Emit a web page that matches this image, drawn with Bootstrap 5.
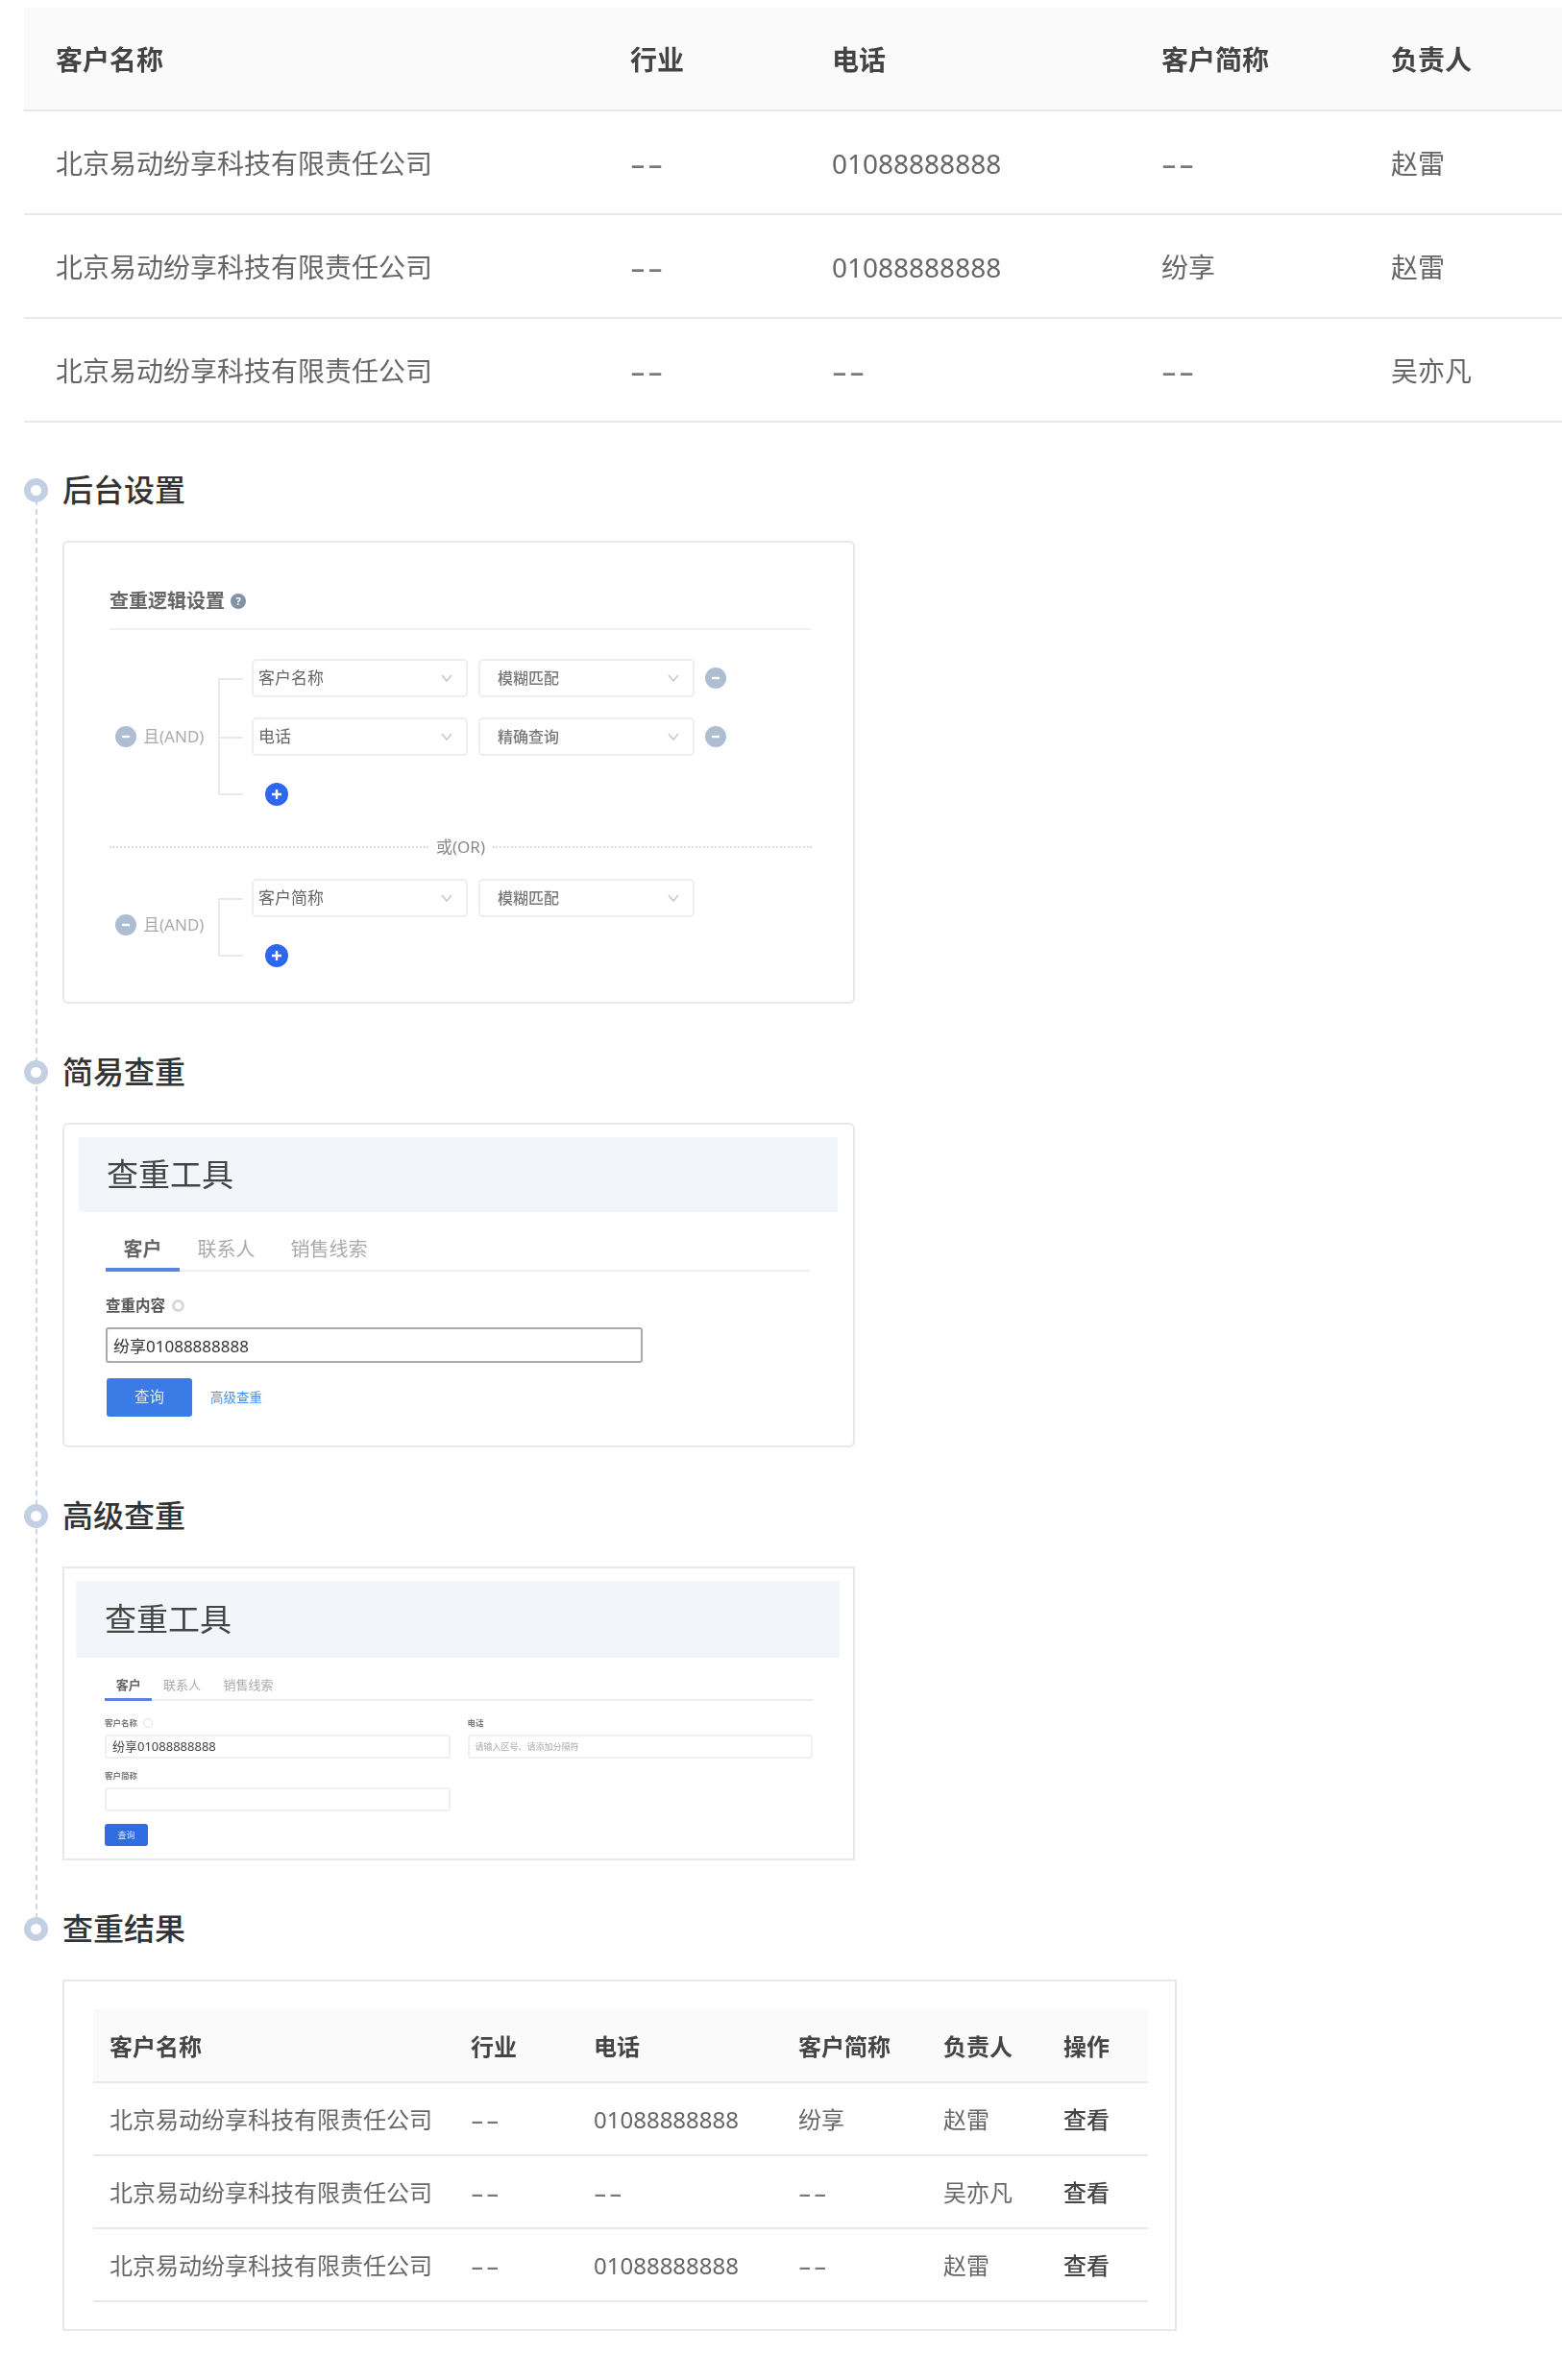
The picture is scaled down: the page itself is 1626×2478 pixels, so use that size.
<!DOCTYPE html>
<html lang="zh-CN">
<head>
<meta charset="utf-8">
<title>查重工具</title>
<link rel="stylesheet" href="https://cdn.jsdelivr.net/npm/bootstrap@5.3.0/dist/css/bootstrap.min.css">
<style>
:root{--cjk:"Noto Sans","Noto Sans CJK SC",sans-serif;}
body{font-family:var(--cjk);color:#666;background:#fff;margin:0;}
.page-wrap{padding:8px 0 0 25px;}
.soft{filter:blur(.45px);}
.softer{filter:blur(.7px);}

.dup-table{table-layout:fixed;margin:0;border-collapse:collapse;color:#666;}
.dup-table th,.dup-table td{vertical-align:middle;padding:2px 0 0;border-bottom:2px solid #e8e8e8;box-shadow:none;background:transparent;color:inherit;white-space:nowrap;}
.dup-table thead th{background:#fafafa;color:#444;font-weight:700;}
.big-table{width:1601px;font-size:28px;}
.big-table th,.big-table td{height:108px;padding-left:33px;}
.big-table thead th{height:107px;}
.big-table .c1{width:598px}.big-table .c2{width:210px}.big-table .c3{width:343px}.big-table .c4{width:239px}
.small-table{width:1098px;font-size:24px;}
.small-table th,.small-table td{height:76px;padding-left:17px;}
.small-table .c1{width:376px}.small-table .c2{width:128px}.small-table .c3{width:213px}.small-table .c4{width:151px}.small-table .c5{width:125px}
.small-table .act{color:#444;font-weight:500;}
.nil{display:inline-block;letter-spacing:1.5px;transform:scaleX(1.75);transform-origin:left center;color:#777;font-weight:500;}

.flow{position:relative;padding-left:40px;margin-top:46px;}
.flow::before{content:"";position:absolute;left:12px;top:24px;height:1498px;border-left:2px dashed #ccd7e7;}
.step{margin-bottom:47px;}
.step-title{position:relative;height:48px;line-height:48px;font-size:32px;font-weight:500;color:#333;margin:0 0 29px;}
.step-title::before{content:"";position:absolute;left:-40px;top:11.5px;width:25px;height:25px;border:7px solid #c3d0e3;border-radius:50%;background:#fff;}
.shot{border:2px solid #e8e8e8;background:#fff;}
.round{border-radius:6px;}
.w-shot{width:825px;}
.w-res{width:1160px;padding:29px 30px 28px;}

.logic{padding:46px 43px 39px 47px;height:482px;}
.logic-title{font-size:20px;line-height:30px;font-weight:700;color:#666;display:flex;align-items:center;gap:6px;padding-bottom:13px;border-bottom:2px solid #f3f1f5;margin-bottom:30px;}
.q-ico{width:16px;height:16px;border-radius:50%;background:#8492a6;color:#fff;font-size:11px;line-height:16px;text-align:center;font-weight:700;}
.logic-group{display:flex;align-items:center;}
.logic-op{width:113px;padding-left:6px;display:flex;align-items:center;gap:7px;font-size:17px;color:#aaa;margin-top:8px;white-space:nowrap;}
.logic-group.two .logic-op{margin-top:4px;}
.logic-rows{position:relative;padding-left:35px;}
.logic-rows::before{content:"";position:absolute;left:0;top:20px;bottom:12px;width:2px;background:#ebe8ed;border-radius:1px;}
.logic-row{position:relative;display:flex;align-items:center;gap:11px;height:40px;margin-bottom:21px;}
.logic-row::before{content:"";position:absolute;left:-35px;top:20px;width:26px;height:2px;background:#ebe8ed;}
.logic-row.add{height:24px;margin:28px 0 0;padding-left:13px;}
.logic-group.two .logic-row.add{margin-top:28px;}
.logic-group.two .logic-row{margin-bottom:0;}
.logic-row.add::before{top:11px;}
.round-btn{flex:none;width:22px;height:22px;border-radius:50%;display:flex;align-items:center;justify-content:center;background:#aebdd2;}
.round-btn svg{display:block;}
.round-btn.plus{width:24px;height:24px;background:#2f66f0;margin-left:1px;}
.pick{width:225px;height:40px;font-size:17px;line-height:36px;padding:0 24px 0 5px;border:2px solid #efedf3;border-radius:5px;color:#666;box-shadow:none;background-size:16px 12px;background-position:right 12px center;background-image:url("data:image/svg+xml,%3csvg xmlns='http://www.w3.org/2000/svg' viewBox='0 0 16 12'%3e%3cpath fill='none' stroke='%23c9c9c9' stroke-width='1.6' d='M3 3l5 6 5-6'/%3e%3c/svg%3e");}
.pick.mode{font-size:16px;padding-left:18px;font-weight:500;color:#777;}
.or-line{display:flex;align-items:center;gap:8px;font-size:17px;color:#888;height:24px;margin:31px 0 21px;}
.or-line::before,.or-line::after{content:"";flex:1;border-top:2px dotted #dcdcdc;}

.band{background:#f2f5fa;color:#444;font-size:33px;display:flex;align-items:center;font-weight:400;margin:0;}
.simple{height:338px;padding:13px 16px 0 15px;}
.simple .band{height:78px;padding-left:29px;}
.simple-body{padding:24px 30px 0 28px;}
.mini-tabs{border-bottom:2px solid #eeeef2;flex-wrap:nowrap;}
.mini-tabs .nav-link{color:#aaa;padding:0;margin-bottom:-2px;border-bottom:4px solid transparent;}
.mini-tabs .nav-link.active{color:#666;font-weight:700;border-bottom-color:#5b82e0;}
.simple .mini-tabs .nav-link{font-size:20px;line-height:30px;padding:0 18.5px 4px;}
.fld-label{display:flex;align-items:center;font-weight:700;color:#555;margin:0;}
.simple .fld-label{font-size:15.5px;line-height:20px;gap:7px;margin:25px 0 13px;}
.dot-q{width:14px;height:14px;border-radius:50%;background:#d4d8de;}
.simple .dot-q{width:13px;height:13px;background:#fff;border:3px solid #d4d8de;}
.simple .query{width:559px;height:37px;font-size:17px;padding:0 6px;border:2px solid #aaa;border-radius:3px;color:#333;box-shadow:none;}
.tool-row{display:flex;align-items:center;gap:19px;margin-top:16px;}
.go-btn{background:#3b7be6;border:0;color:#dfe9fb;border-radius:3px;padding:0;}
.simple .go-btn{width:89px;height:40px;font-size:15.5px;margin-left:1px;}
.more-link{font-size:13.5px;color:#4a90f0;text-decoration:none;}

.adv{height:306px;padding:13px 14px 0 12px;}
.adv .band{height:80px;padding-left:30px;}
.adv-body{padding:19px 28px 0 30px;}
.adv .mini-tabs{border-bottom-width:2px;}
.adv .mini-tabs .nav-link{font-size:13px;line-height:18px;padding:0 11.7px 5px;border-bottom-width:3px;}
.adv-grid{--bs-gutter-x:18px;margin-top:17px;}
.adv .fld-label{font-size:8.5px;line-height:12px;gap:6px;margin-bottom:6px;color:#777;}
.adv .dot-q{width:10px;height:10px;background:none;border:1px solid #ddd;}
.adv .query{height:25px;font-size:13px;padding:0 6px 3px;border:2px solid #f0f0f2;border-radius:3px;color:#444;box-shadow:none;}
.adv .query::placeholder{font-size:9px;color:#aaa;}
.adv-two{margin-top:12px;width:360px;}
.adv .go-btn{display:block;width:45px;height:23px;font-size:9px;margin-top:13px;background:#2f6de0;}
</style>
</head>
<body>
<div class="page-wrap">
  <div class="soft">
  <table class="table dup-table big-table">
    <thead><tr><th class="c1">客户名称</th><th class="c2">行业</th><th class="c3">电话</th><th class="c4">客户简称</th><th>负责人</th></tr></thead>
    <tbody>
      <tr><td>北京易动纷享科技有限责任公司</td><td><span class="nil">--</span></td><td>01088888888</td><td><span class="nil">--</span></td><td>赵雷</td></tr>
      <tr><td>北京易动纷享科技有限责任公司</td><td><span class="nil">--</span></td><td>01088888888</td><td>纷享</td><td>赵雷</td></tr>
      <tr><td>北京易动纷享科技有限责任公司</td><td><span class="nil">--</span></td><td><span class="nil">--</span></td><td><span class="nil">--</span></td><td>吴亦凡</td></tr>
    </tbody>
  </table>
  </div>

  <div class="flow">
    <section class="step">
      <h2 class="step-title">后台设置</h2>
      <div class="shot round w-shot logic">
        <div class="softer">
        <div class="logic-title">查重逻辑设置<span class="q-ico">?</span></div>
        <div class="logic-group">
          <div class="logic-op"><span class="round-btn"><svg width="12" height="12" viewBox="0 0 12 12"><path d="M2 6h8" stroke="#fff" stroke-width="2.4"/></svg></span>且(AND)</div>
          <div class="logic-rows">
            <div class="logic-row"><select class="form-select pick"><option>客户名称</option></select><select class="form-select pick mode"><option>模糊匹配</option></select><span class="round-btn"><svg width="12" height="12" viewBox="0 0 12 12"><path d="M2 6h8" stroke="#fff" stroke-width="2.4"/></svg></span></div>
            <div class="logic-row"><select class="form-select pick"><option>电话</option></select><select class="form-select pick mode"><option>精确查询</option></select><span class="round-btn"><svg width="12" height="12" viewBox="0 0 12 12"><path d="M2 6h8" stroke="#fff" stroke-width="2.4"/></svg></span></div>
            <div class="logic-row add"><span class="round-btn plus"><svg width="14" height="14" viewBox="0 0 14 14"><path d="M7 2v10M2 7h10" stroke="#fff" stroke-width="2.4"/></svg></span></div>
          </div>
        </div>
        <div class="or-line">或(OR)</div>
        <div class="logic-group two">
          <div class="logic-op"><span class="round-btn"><svg width="12" height="12" viewBox="0 0 12 12"><path d="M2 6h8" stroke="#fff" stroke-width="2.4"/></svg></span>且(AND)</div>
          <div class="logic-rows">
            <div class="logic-row"><select class="form-select pick"><option>客户简称</option></select><select class="form-select pick mode"><option>模糊匹配</option></select></div>
            <div class="logic-row add"><span class="round-btn plus"><svg width="14" height="14" viewBox="0 0 14 14"><path d="M7 2v10M2 7h10" stroke="#fff" stroke-width="2.4"/></svg></span></div>
          </div>
        </div>
        </div>
      </div>
    </section>

    <section class="step">
      <h2 class="step-title">简易查重</h2>
      <div class="shot round w-shot simple">
        <div class="soft">
        <h3 class="band">查重工具</h3>
        <div class="simple-body">
          <ul class="nav mini-tabs">
            <li class="nav-item"><a class="nav-link active" href="#">客户</a></li>
            <li class="nav-item"><a class="nav-link" href="#">联系人</a></li>
            <li class="nav-item"><a class="nav-link" href="#">销售线索</a></li>
          </ul>
          <label class="fld-label">查重内容<span class="dot-q"></span></label>
          <input class="form-control query" value="纷享01088888888">
          <div class="tool-row"><button class="btn go-btn" type="button">查询</button><a class="more-link" href="#">高级查重</a></div>
        </div>
        </div>
      </div>
    </section>

    <section class="step">
      <h2 class="step-title">高级查重</h2>
      <div class="shot w-shot adv">
        <div class="soft">
        <h3 class="band">查重工具</h3>
        <div class="adv-body">
          <ul class="nav mini-tabs">
            <li class="nav-item"><a class="nav-link active" href="#">客户</a></li>
            <li class="nav-item"><a class="nav-link" href="#">联系人</a></li>
            <li class="nav-item"><a class="nav-link" href="#">销售线索</a></li>
          </ul>
          <div class="row adv-grid">
            <div class="col-6"><label class="fld-label">客户名称<span class="dot-q"></span></label><input class="form-control query" value="纷享01088888888"></div>
            <div class="col-6"><label class="fld-label">电话</label><input class="form-control query" placeholder="请输入区号、请添加分隔符"></div>
          </div>
          <div class="adv-two"><label class="fld-label">客户简称</label><input class="form-control query"></div>
          <button class="btn go-btn" type="button">查询</button>
        </div>
        </div>
      </div>
    </section>

    <section class="step mb-0">
      <h2 class="step-title">查重结果</h2>
      <div class="shot w-res">
        <div class="soft">
        <table class="table dup-table small-table">
          <thead><tr><th class="c1">客户名称</th><th class="c2">行业</th><th class="c3">电话</th><th class="c4">客户简称</th><th class="c5">负责人</th><th>操作</th></tr></thead>
          <tbody>
            <tr><td>北京易动纷享科技有限责任公司</td><td><span class="nil">--</span></td><td>01088888888</td><td>纷享</td><td>赵雷</td><td class="act">查看</td></tr>
            <tr><td>北京易动纷享科技有限责任公司</td><td><span class="nil">--</span></td><td><span class="nil">--</span></td><td><span class="nil">--</span></td><td>吴亦凡</td><td class="act">查看</td></tr>
            <tr><td>北京易动纷享科技有限责任公司</td><td><span class="nil">--</span></td><td>01088888888</td><td><span class="nil">--</span></td><td>赵雷</td><td class="act">查看</td></tr>
          </tbody>
        </table>
        </div>
      </div>
    </section>
  </div>
</div>
<script src="https://cdn.jsdelivr.net/npm/bootstrap@5.3.0/dist/js/bootstrap.bundle.min.js"></script>
</body>
</html>
